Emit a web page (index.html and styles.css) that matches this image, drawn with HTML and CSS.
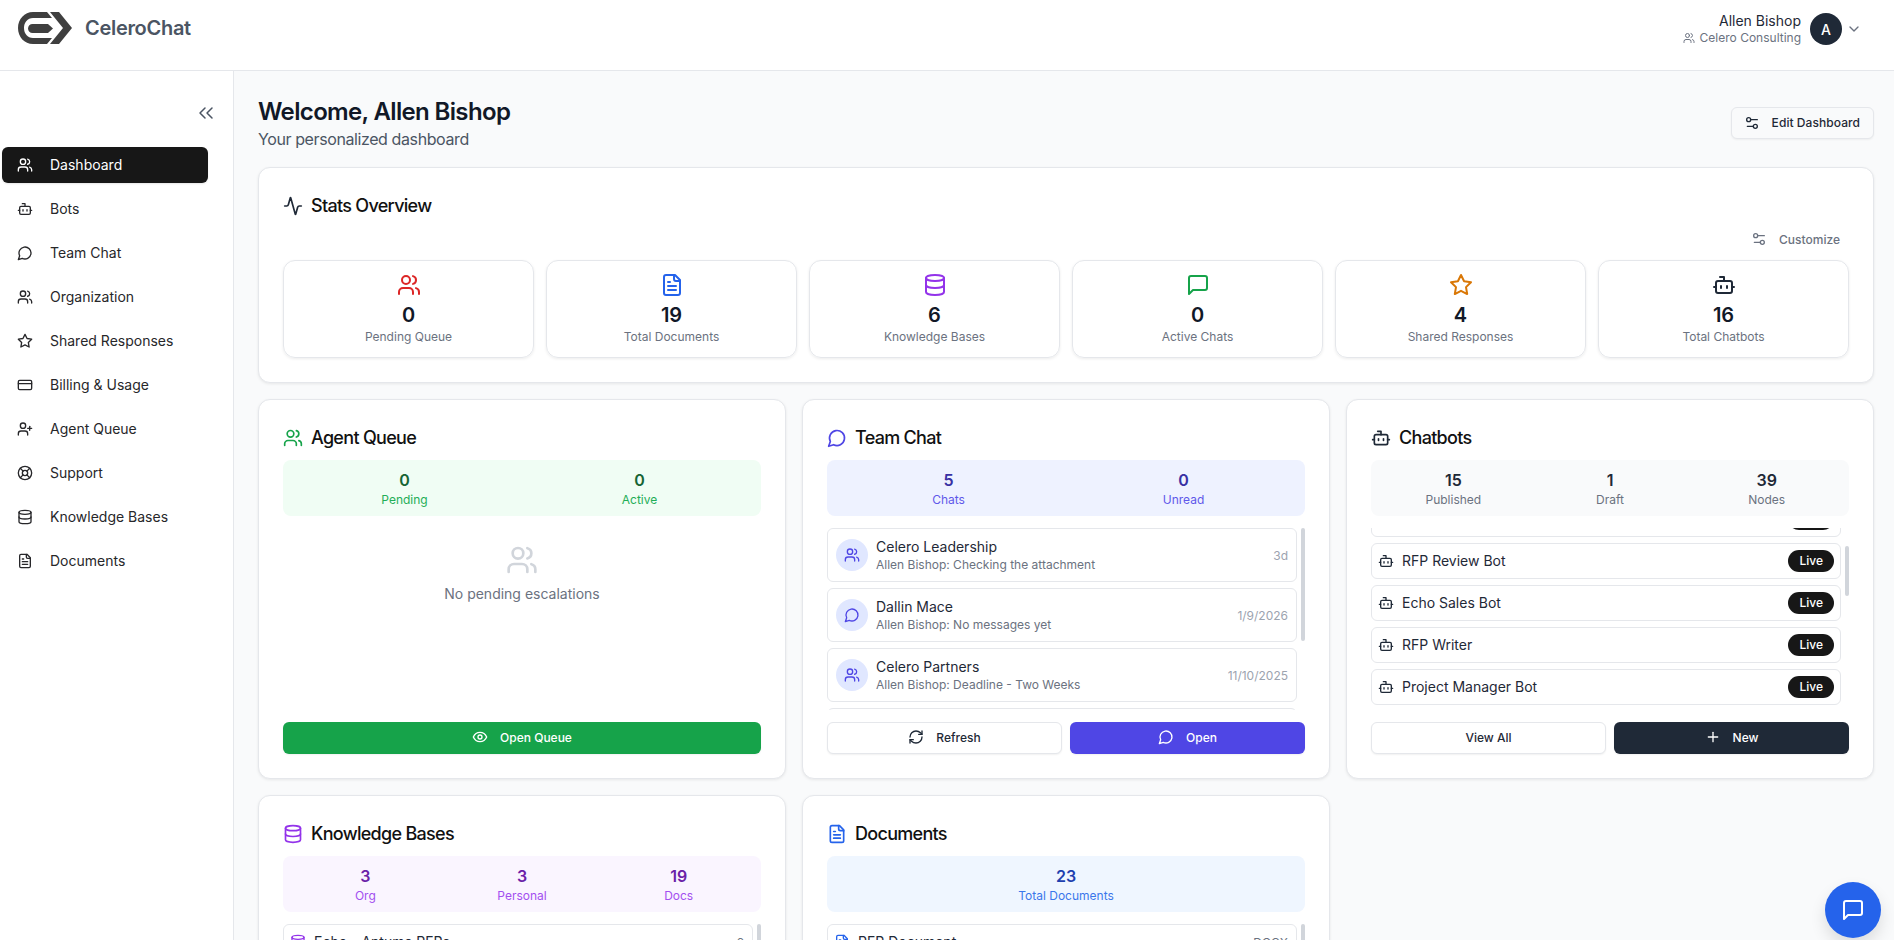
FILE: index.html
```html
<!DOCTYPE html>
<html lang="en">
<head>
<meta charset="utf-8">
<title>CeleroChat</title>
<link rel="stylesheet" href="styles.css">
</head>
<body>
<svg class="sprite" aria-hidden="true">
  <symbol id="users" viewBox="0 0 24 24"><path d="M16 21v-2a4 4 0 0 0-4-4H6a4 4 0 0 0-4 4v2"/><circle cx="9" cy="7" r="4"/><path d="M22 21v-2a4 4 0 0 0-3-3.87"/><path d="M16 3.13a4 4 0 0 1 0 7.75"/></symbol>
  <symbol id="bot" viewBox="0 0 24 24"><path d="M12 8V4H8"/><rect width="16" height="12" x="4" y="8" rx="2"/><path d="M2 14h2"/><path d="M20 14h2"/><path d="M15 13v2"/><path d="M9 13v2"/></symbol>
  <symbol id="circle-msg" viewBox="0 0 24 24"><path d="M7.9 20A9 9 0 1 0 4 16.1L2 22Z"/></symbol>
  <symbol id="square-msg" viewBox="0 0 24 24"><path d="M21 15a2 2 0 0 1-2 2H7l-4 4V5a2 2 0 0 1 2-2h14a2 2 0 0 1 2 2z"/></symbol>
  <symbol id="star" viewBox="0 0 24 24"><polygon points="12 2 15.09 8.26 22 9.27 17 14.14 18.18 21.02 12 17.77 5.82 21.02 7 14.14 2 9.27 8.91 8.26"/></symbol>
  <symbol id="card" viewBox="0 0 24 24"><rect width="20" height="14" x="2" y="5" rx="2"/><line x1="2" x2="22" y1="10" y2="10"/></symbol>
  <symbol id="user-plus" viewBox="0 0 24 24"><path d="M16 21v-2a4 4 0 0 0-4-4H6a4 4 0 0 0-4 4v2"/><circle cx="9" cy="7" r="4"/><line x1="19" x2="19" y1="8" y2="14"/><line x1="22" x2="16" y1="11" y2="11"/></symbol>
  <symbol id="buoy" viewBox="0 0 24 24"><circle cx="12" cy="12" r="10"/><path d="m4.93 4.93 4.24 4.24"/><path d="m14.83 9.17 4.24-4.24"/><path d="m14.83 14.83 4.24 4.24"/><path d="m9.17 14.83-4.24 4.24"/><circle cx="12" cy="12" r="4"/></symbol>
  <symbol id="db" viewBox="0 0 24 24"><ellipse cx="12" cy="5" rx="9" ry="3"/><path d="M3 5V19A9 3 0 0 0 21 19V5"/><path d="M3 12A9 3 0 0 0 21 12"/></symbol>
  <symbol id="doc" viewBox="0 0 24 24"><path d="M15 2H6a2 2 0 0 0-2 2v16a2 2 0 0 0 2 2h12a2 2 0 0 0 2-2V7Z"/><path d="M14 2v4a2 2 0 0 0 2 2h4"/><path d="M10 9H8"/><path d="M16 13H8"/><path d="M16 17H8"/></symbol>
  <symbol id="activity" viewBox="0 0 24 24"><path d="M22 12h-2.48a2 2 0 0 0-1.93 1.46l-2.35 8.36a.25.25 0 0 1-.48 0L9.24 2.18a.25.25 0 0 0-.48 0l-2.35 8.36A2 2 0 0 1 4.49 12H2"/></symbol>
  <symbol id="sliders" viewBox="0 0 24 24"><path d="M20 7h-9"/><path d="M14 17H5"/><circle cx="17" cy="17" r="3"/><circle cx="7" cy="7" r="3"/></symbol>
  <symbol id="chevrons-left" viewBox="0 0 24 24"><path d="m11 17-5-5 5-5"/><path d="m18 17-5-5 5-5"/></symbol>
  <symbol id="chevron-down" viewBox="0 0 24 24"><path d="m6 9 6 6 6-6"/></symbol>
  <symbol id="refresh" viewBox="0 0 24 24"><path d="M3 12a9 9 0 0 1 9-9 9.75 9.75 0 0 1 6.74 2.74L21 8"/><path d="M21 3v5h-5"/><path d="M21 12a9 9 0 0 1-9 9 9.75 9.75 0 0 1-6.74-2.74L3 16"/><path d="M8 16H3v5"/></symbol>
  <symbol id="eye" viewBox="0 0 24 24"><path d="M2 12s3-7 10-7 10 7 10 7-3 7-10 7-10-7-10-7Z"/><circle cx="12" cy="12" r="3"/></symbol>
  <symbol id="plus" viewBox="0 0 24 24"><path d="M5 12h14"/><path d="M12 5v14"/></symbol>
</svg>

<header class="topbar">
  <div class="brand">
    <svg class="logo" viewBox="0 0 54 32" aria-hidden="true">
      <path d="M29 0H15C6.500 0 0 7 0 16s6.500 16 15 16h14l5-6H15c-5.500 0-9-4.500-9-10s3.500-10 9-10h19z"/>
      <path d="M14.500 12H30l5 4.500-5 4.500H14.500c-2.500 0-4.500-2-4.500-4.500s2-4.500 4.500-4.500z"/>
      <path d="M32 0h9l13 16-13 16h-9l13-16z"/>
    </svg>
    <span class="brand-name">CeleroChat</span>
  </div>
  <div class="account">
    <div class="account-text">
      <div class="account-name">Allen Bishop</div>
      <div class="account-org"><svg class="i i12"><use href="#users"/></svg>Celero Consulting</div>
    </div>
    <div class="avatar">A</div>
    <svg class="i i16 muted"><use href="#chevron-down"/></svg>
  </div>
</header>

<div class="shell">
  <aside class="sidebar">
    <div class="collapse"><svg class="i i24 thin"><use href="#chevrons-left"/></svg></div>
    <nav class="nav">
      <a class="nav-item active"><svg class="i i16"><use href="#users"/></svg>Dashboard</a>
      <a class="nav-item"><svg class="i i16"><use href="#bot"/></svg>Bots</a>
      <a class="nav-item"><svg class="i i16"><use href="#circle-msg"/></svg>Team Chat</a>
      <a class="nav-item"><svg class="i i16"><use href="#users"/></svg>Organization</a>
      <a class="nav-item"><svg class="i i16"><use href="#star"/></svg>Shared Responses</a>
      <a class="nav-item"><svg class="i i16"><use href="#card"/></svg>Billing &amp; Usage</a>
      <a class="nav-item"><svg class="i i16"><use href="#user-plus"/></svg>Agent Queue</a>
      <a class="nav-item"><svg class="i i16"><use href="#buoy"/></svg>Support</a>
      <a class="nav-item"><svg class="i i16"><use href="#db"/></svg>Knowledge Bases</a>
      <a class="nav-item"><svg class="i i16"><use href="#doc"/></svg>Documents</a>
    </nav>
  </aside>

  <main class="main">
    <div class="page-head">
      <div>
        <h1 class="page-title">Welcome, Allen Bishop</h1>
        <p class="page-sub">Your personalized dashboard</p>
      </div>
      <button class="edit-btn"><svg class="i i16"><use href="#sliders"/></svg>Edit Dashboard</button>
    </div>

    <section class="card">
      <h2 class="card-title"><svg class="i i20 c-slate"><use href="#activity"/></svg>Stats Overview</h2>
      <div class="customize-row"><button class="customize"><svg class="i i16"><use href="#sliders"/></svg>Customize</button></div>
      <div class="stat-grid">
        <div class="stat"><svg class="i i24 c-red"><use href="#users"/></svg><div class="stat-num">0</div><div class="stat-label">Pending Queue</div></div>
        <div class="stat"><svg class="i i24 c-blue"><use href="#doc"/></svg><div class="stat-num">19</div><div class="stat-label">Total Documents</div></div>
        <div class="stat"><svg class="i i24 c-purple"><use href="#db"/></svg><div class="stat-num">6</div><div class="stat-label">Knowledge Bases</div></div>
        <div class="stat"><svg class="i i24 c-green"><use href="#square-msg"/></svg><div class="stat-num">0</div><div class="stat-label">Active Chats</div></div>
        <div class="stat"><svg class="i i24 c-amber"><use href="#star"/></svg><div class="stat-num">4</div><div class="stat-label">Shared Responses</div></div>
        <div class="stat"><svg class="i i24 c-slate"><use href="#bot"/></svg><div class="stat-num">16</div><div class="stat-label">Total Chatbots</div></div>
      </div>
    </section>

    <div class="widgets">
      <section class="card">
        <h2 class="card-title"><svg class="i i20 c-green"><use href="#users"/></svg>Agent Queue</h2>
        <div class="strip strip-green">
          <div class="strip-cell"><div class="strip-num">0</div><div class="strip-label">Pending</div></div>
          <div class="strip-cell"><div class="strip-num">0</div><div class="strip-label">Active</div></div>
        </div>
        <div class="body empty">
          <svg class="i i32"><use href="#users"/></svg>
          <p class="empty-text">No pending escalations</p>
        </div>
        <div class="actions">
          <button class="btn btn-green"><svg class="i i16"><use href="#eye"/></svg>Open Queue</button>
        </div>
      </section>

      <section class="card">
        <h2 class="card-title"><svg class="i i20 c-indigo"><use href="#circle-msg"/></svg>Team Chat</h2>
        <div class="strip strip-indigo">
          <div class="strip-cell"><div class="strip-num">5</div><div class="strip-label">Chats</div></div>
          <div class="strip-cell"><div class="strip-num">0</div><div class="strip-label">Unread</div></div>
        </div>
        <div class="body list">
          <div class="row chat-row">
            <span class="chat-avatar"><svg class="i i16"><use href="#users"/></svg></span>
            <div class="chat-text"><div class="chat-name">Celero Leadership</div><div class="chat-sub">Allen Bishop: Checking the attachment</div></div>
            <span class="chat-date">3d</span>
          </div>
          <div class="row chat-row">
            <span class="chat-avatar"><svg class="i i16"><use href="#circle-msg"/></svg></span>
            <div class="chat-text"><div class="chat-name">Dallin Mace</div><div class="chat-sub">Allen Bishop: No messages yet</div></div>
            <span class="chat-date">1/9/2026</span>
          </div>
          <div class="row chat-row">
            <span class="chat-avatar"><svg class="i i16"><use href="#users"/></svg></span>
            <div class="chat-text"><div class="chat-name">Celero Partners</div><div class="chat-sub">Allen Bishop: Deadline - Two Weeks</div></div>
            <span class="chat-date">11/10/2025</span>
          </div>
          <div class="row chat-row"></div>
          <span class="thumb thumb-chat"></span>
        </div>
        <div class="actions">
          <button class="btn btn-light"><svg class="i i16"><use href="#refresh"/></svg>Refresh</button>
          <button class="btn btn-indigo"><svg class="i i16"><use href="#circle-msg"/></svg>Open</button>
        </div>
      </section>

      <section class="card">
        <h2 class="card-title"><svg class="i i20 c-slate"><use href="#bot"/></svg>Chatbots</h2>
        <div class="strip strip-gray">
          <div class="strip-cell"><div class="strip-num">15</div><div class="strip-label">Published</div></div>
          <div class="strip-cell"><div class="strip-num">1</div><div class="strip-label">Draft</div></div>
          <div class="strip-cell"><div class="strip-num">39</div><div class="strip-label">Nodes</div></div>
        </div>
        <div class="body list">
          <div class="row bot-row scrolled-first"><span class="live">Live</span></div>
          <div class="row bot-row"><svg class="i i16 c-slate"><use href="#bot"/></svg><span class="row-name">RFP Review Bot</span><span class="live">Live</span></div>
          <div class="row bot-row"><svg class="i i16 c-slate"><use href="#bot"/></svg><span class="row-name">Echo Sales Bot</span><span class="live">Live</span></div>
          <div class="row bot-row"><svg class="i i16 c-slate"><use href="#bot"/></svg><span class="row-name">RFP Writer</span><span class="live">Live</span></div>
          <div class="row bot-row"><svg class="i i16 c-slate"><use href="#bot"/></svg><span class="row-name">Project Manager Bot</span><span class="live">Live</span></div>
          <span class="thumb thumb-bots"></span>
        </div>
        <div class="actions">
          <button class="btn btn-light">View All</button>
          <button class="btn btn-dark"><svg class="i i16"><use href="#plus"/></svg>New</button>
        </div>
      </section>

      <section class="card">
        <h2 class="card-title"><svg class="i i20 c-purple"><use href="#db"/></svg>Knowledge Bases</h2>
        <div class="strip strip-purple">
          <div class="strip-cell"><div class="strip-num">3</div><div class="strip-label">Org</div></div>
          <div class="strip-cell"><div class="strip-num">3</div><div class="strip-label">Personal</div></div>
          <div class="strip-cell"><div class="strip-num">19</div><div class="strip-label">Docs</div></div>
        </div>
        <div class="body list">
          <div class="row bot-row"><svg class="i i16 c-purple"><use href="#db"/></svg><span class="row-name">Echo - Antuma RFPs</span><span class="row-meta">6</span></div>
          <span class="thumb thumb-chat"></span>
        </div>
      </section>

      <section class="card">
        <h2 class="card-title"><svg class="i i20 c-blue"><use href="#doc"/></svg>Documents</h2>
        <div class="strip strip-blue">
          <div class="strip-cell"><div class="strip-num">23</div><div class="strip-label">Total Documents</div></div>
        </div>
        <div class="body list">
          <div class="row bot-row"><svg class="i i16 c-blue"><use href="#doc"/></svg><span class="row-name">RFP Document</span><span class="row-meta">DOCX</span></div>
          <span class="thumb thumb-chat"></span>
        </div>
      </section>
    </div>
  </main>
</div>

<button class="fab" aria-label="Open chat"><svg class="i i24"><use href="#square-msg"/></svg></button>
</body>
</html>
```

FILE: styles.css
```css
* { box-sizing: border-box; }
html, body { margin: 0; height: 100%; }
body {
  font-family: Inter, "Noto Sans", sans-serif;
  color: #111827;
  background: #fff;
  overflow: hidden;
  display: flex;
  flex-direction: column;
}
button { font-family: inherit; cursor: pointer; }
.sprite { display: none; }

.i { fill: none; stroke: currentColor; stroke-width: 2; stroke-linecap: round; stroke-linejoin: round; flex: none; display: block; }
.i12 { width: 12px; height: 12px; }
.i16 { width: 16px; height: 16px; }
.i20 { width: 20px; height: 20px; }
.i24 { width: 24px; height: 24px; }
.i32 { width: 32px; height: 32px; }
.thin { stroke-width: 1.5; }
.muted { color: #6b7280; }
.c-slate { color: #1f2937; }
.c-red { color: #dc2626; }
.c-blue { color: #2563eb; }
.c-purple { color: #9333ea; }
.c-green { color: #16a34a; }
.c-amber { color: #d97706; }
.c-indigo { color: #4f46e5; }

.topbar {
  height: 71px;
  flex: none;
  display: flex;
  align-items: flex-start;
  justify-content: space-between;
  padding: 12px 32px 0 18px;
  border-bottom: 1px solid #e5e7eb;
  background: #fff;
}
.brand { display: flex; align-items: center; gap: 13px; }
.logo { width: 54px; height: 32px; fill: #3f3f3f; display: block; }
.brand-name { font-size: 20px; line-height: 28px; font-weight: 600; letter-spacing: -.3px; color: #4b5563; }
.account { display: flex; align-items: center; }
.account-text { text-align: right; margin-right: 9px; }
.account-name { font-size: 14px; line-height: 18px; color: #1f2937; }
.account-org { font-size: 12px; line-height: 16px; color: #6b7280; display: flex; align-items: center; justify-content: flex-end; gap: 5px; }
.avatar { width: 32px; height: 32px; border-radius: 50%; background: #1f2937; color: #fff; font-size: 14px; font-weight: 500; display: flex; align-items: center; justify-content: center; margin-right: 4px; }

.shell { flex: 1; display: flex; min-height: 0; }
.sidebar { width: 234px; flex: none; border-right: 1px solid #e5e7eb; background: #fff; padding: 30px 25px 0 2px; }
.collapse { display: flex; justify-content: flex-end; color: #4b5563; margin-right: -10px; }
.nav { margin-top: 22px; display: flex; flex-direction: column; gap: 8px; }
.nav-item { height: 36px; padding-bottom: 1px; border-radius: 6px; display: flex; align-items: center; gap: 17px; padding-left: 15px; font-size: 14px; color: #27272a; }
.nav-item.active { background: #171717; color: #fff; box-shadow: 0 1px 2px rgba(0,0,0,.1); }

.main { flex: 1; min-width: 0; background: #f9fafb; padding: 24px 20px 0 24px; overflow: hidden; }
.page-head { display: flex; justify-content: space-between; align-items: center; margin-bottom: 16px; }
.page-title { margin: 0; padding-top: 1px; font-size: 24px; line-height: 32px; font-weight: 600; letter-spacing: -.65px; color: #111827; }
.page-sub { margin: -1px 0 0; font-size: 16px; line-height: 24px; letter-spacing: -.4px; color: #4b5563; }
.edit-btn { height: 32px; display: flex; align-items: center; gap: 12px; padding: 0 13px 1px 12px; border: 1px solid #e5e7eb; border-radius: 6px; background: #f9fafb; font-size: 12px; font-weight: 500; letter-spacing: .06px; color: #1f2937; box-shadow: 0 1px 2px rgba(0,0,0,.05); }

.card { background: #fff; border: 1px solid #e5e7eb; border-radius: 12px; padding: 24px; box-shadow: 0 1px 3px rgba(0,0,0,.08); }
.card-title { margin: 0 0 8px; display: flex; align-items: center; gap: 8px; font-size: 18px; line-height: 28px; font-weight: 500; letter-spacing: -.7px; color: #111; }

.customize-row { display: flex; justify-content: flex-end; margin-bottom: 8px; }
.customize { height: 24px; display: flex; align-items: center; gap: 12px; padding: 0 9px 2px; border: 0; background: none; font-size: 12px; font-weight: 500; color: #6b7280; }

.stat-grid { display: grid; grid-template-columns: repeat(6, 1fr); gap: 12px; }
.stat { border: 1px solid #e5e7eb; border-radius: 12px; padding: 12px; display: flex; flex-direction: column; align-items: center; box-shadow: 0 1px 3px rgba(0,0,0,.08); height: 98px; }
.stat-num { margin-top: 4px; font-size: 20px; line-height: 28px; font-weight: 600; color: #111827; }
.stat-label { font-size: 12px; line-height: 16px; color: #6b7280; }

.widgets { display: grid; grid-template-columns: repeat(3, 1fr); gap: 16px; margin-top: 16px; }

.strip { display: flex; gap: 16px; padding: 8px 12px; border-radius: 8px; text-align: center; }
.strip-cell { flex: 1; }
.strip-num { font-size: 16px; line-height: 24px; font-weight: 600; }
.strip-label { font-size: 12px; line-height: 16px; }
.strip-green { background: #f0fdf4; } .strip-green .strip-num { color: #166534; } .strip-green .strip-label { color: #1fae57; }
.strip-indigo { background: #eef2ff; } .strip-indigo .strip-num { color: #3730a3; } .strip-indigo .strip-label { color: #5f58ea; }
.strip-gray { background: #f9fafb; } .strip-gray .strip-num { color: #1f2937; } .strip-gray .strip-label { color: #6b7280; }
.strip-purple { background: #faf5ff; } .strip-purple .strip-num { color: #6b21a8; } .strip-purple .strip-label { color: #a34ff0; }
.strip-blue { background: #eff6ff; } .strip-blue .strip-num { color: #1e40af; } .strip-blue .strip-label { color: #3b76eb; }

.body { height: 182px; margin-top: 12px; }
.empty { display: flex; flex-direction: column; align-items: center; padding-top: 16px; color: #d1d5db; }
.empty-text { margin: 8px 0 0; font-size: 14px; line-height: 20px; color: #6b7280; }

.list { position: relative; overflow: hidden; padding-right: 8px; display: flex; flex-direction: column; gap: 6px; }
.row { flex: none; border: 1px solid #e5e7eb; border-radius: 6px; display: flex; align-items: center; background: #fff; }
.thumb { position: absolute; top: 0; right: 0; width: 4px; border-radius: 2px; background: #d1d5db; }
.thumb-chat { height: 113px; }
.thumb-bots { top: 18px; height: 50px; }

.chat-row { height: 54px; padding: 0 8px; gap: 8px; }
.chat-avatar { width: 32px; height: 32px; border-radius: 50%; background: #e0e7ff; color: #4f46e5; display: flex; align-items: center; justify-content: center; flex: none; }
.chat-text { flex: 1; min-width: 0; }
.chat-name { font-size: 14px; line-height: 20px; color: #1f2937; }
.chat-sub { font-size: 12px; line-height: 16px; color: #6b7280; }
.chat-date { font-size: 12px; color: #9ca3af; }

.bot-row { height: 36px; padding: 0 6px; gap: 8px; }
.scrolled-first { margin-top: -27px; justify-content: flex-end; }
.row-name { flex: 1; min-width: 0; font-size: 14px; line-height: 20px; color: #1f2937; }
.row-meta { font-size: 12px; color: #6b7280; padding-right: 2px; }
.live { padding: 3px 11px; border-radius: 999px; background: #171717; color: #fff; font-size: 12px; line-height: 16px; font-weight: 500; }

.actions { display: flex; gap: 8px; margin-top: 12px; }
.btn { flex: 1; height: 32px; padding: 0 0 2px; display: flex; align-items: center; justify-content: center; gap: 12px; border-radius: 6px; border: 0; font-size: 12px; font-weight: 500; box-shadow: 0 1px 2px rgba(0,0,0,.06); }
.btn-green { background: #16a34a; color: #fff; }
.btn-light { flex: 234; background: #fff; border: 1px solid #e5e7eb; color: #1f2937; }
.btn-indigo { flex: 236; background: #4f46e5; color: #fff; }
.btn-dark { flex: 236; background: #1f2937; color: #fff; }

.fab { position: fixed; right: 13px; bottom: 2px; width: 56px; height: 56px; border: 0; border-radius: 50%; background: #2563eb; color: #fff; display: flex; align-items: center; justify-content: center; box-shadow: 0 8px 16px rgba(0,0,0,.12); }
```
